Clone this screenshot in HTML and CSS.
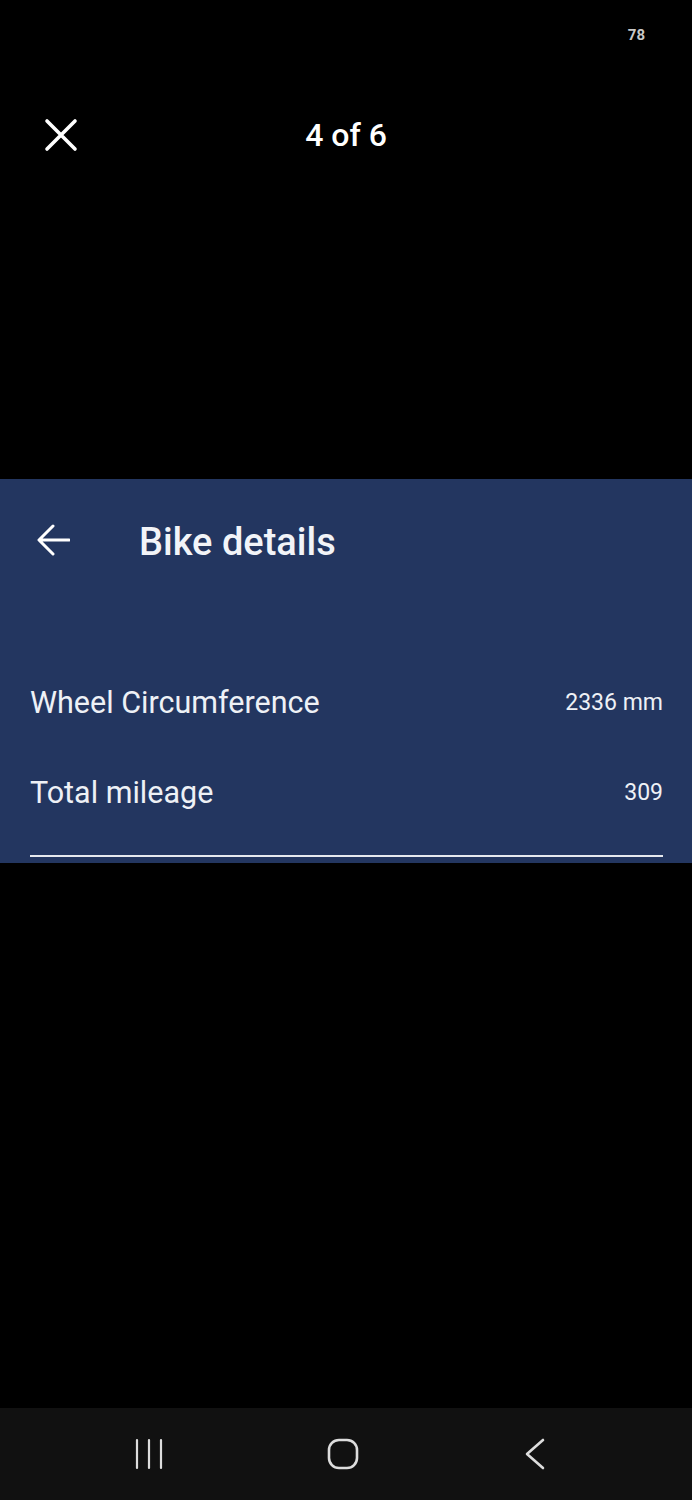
FILE: index.html
```html
<!DOCTYPE html>
<html lang="en">
<head>
  <meta charset="UTF-8">
  <meta name="viewport" content="width=device-width, initial-scale=1.0">
  <title>Bike details - 4 of 6</title>
  <link rel="stylesheet" href="styles.css">
</head>
<body>
  <div class="status">
    <span class="battery">78</span>
  </div>

  <div class="viewer-top">
    <svg class="close" width="34" height="34" viewBox="0 0 34 34">
      <path d="M3 3 L31 31 M31 3 L3 31" stroke="#fff" stroke-width="3.6" stroke-linecap="round" fill="none"/>
    </svg>
    <div class="counter">4 of 6</div>
  </div>

  <div class="stage">
    <div class="shot">
      <div class="appbar">
        <svg class="back" width="34" height="34" viewBox="0 0 34 34">
          <path d="M33 16 H4 M17 2 L3 16 L17 30" stroke="#fff" stroke-width="3" stroke-linecap="round" stroke-linejoin="round" fill="none"/>
        </svg>
        <h1>Bike details</h1>
      </div>

      <div class="rows">
        <div class="row">
          <span class="label">Wheel Circumference</span>
          <span class="value">2336 mm</span>
        </div>
        <div class="row">
          <span class="label">Total mileage</span>
          <span class="value">309</span>
        </div>
      </div>
      <div class="divider"></div>
    </div>
  </div>

  <div class="navbar">
    <svg width="30" height="32" viewBox="0 0 30 32">
      <path d="M3 2 V30 M15 2 V30 M27 2 V30" stroke="#ddd" stroke-width="2.2" stroke-linecap="round"/>
    </svg>
    <svg class="nav-home" width="32" height="32" viewBox="0 0 32 32">
      <rect x="2" y="2" width="28" height="28" rx="10" stroke="#ddd" stroke-width="2.6" fill="none"/>
    </svg>
    <svg class="nav-back" width="24" height="32" viewBox="0 0 24 32">
      <path d="M20 2 L4 16 L20 30" stroke="#ddd" stroke-width="2.6" stroke-linecap="round" stroke-linejoin="round" fill="none"/>
    </svg>
  </div>
</body>
</html>
```

FILE: styles.css
```css
body {
  margin: 0;
  background-color: #000000;
  color: #ffffff;
  font-family: Roboto, "Noto Sans", sans-serif;
  height: 1500px;
  display: flex;
  flex-direction: column;
}
.status {
  height: 70px;
  display: flex;
  align-items: center;
  justify-content: flex-end;
  padding-right: 47px;
}
.battery {
  font-size: 15px;
  font-weight: 700;
  color: #c8c8c8;
}
.viewer-top {
  height: 130px;
  display: flex;
  align-items: center;
  position: relative;
  padding-left: 44px;
}
.counter {
  position: absolute;
  left: 0;
  right: 0;
  text-align: center;
  font-size: 32px;
  font-weight: 500;
  pointer-events: none;
}
.stage {
  flex: 1;
  padding-top: 279px;
}
.shot {
  background-color: #233660;
  height: 384px;
}
.appbar {
  height: 124px;
  display: flex;
  align-items: center;
  padding-left: 36px;
}
.appbar h1 {
  margin: 2px 0 0 69px;
  font-size: 38px;
  font-weight: 500;
  color: #f2f4f8;
}
.rows {
  padding: 54px 29px 0 30px;
}
.row {
  height: 90px;
  display: flex;
  align-items: center;
  justify-content: space-between;
  color: #eef1f6;
}
.label {
  font-size: 30.5px;
}
.value {
  font-size: 23px;
}
.divider {
  height: 2px;
  margin: 18px 29px 0 30px;
  background-color: #e6e9ef;
}
.navbar {
  height: 92px;
  background-color: #111111;
  display: flex;
  align-items: center;
  gap: 161px;
  padding-left: 134px;
}
.nav-home {
  margin-left: 2px;
}
.nav-back {
  margin-left: 3px;
}
```
